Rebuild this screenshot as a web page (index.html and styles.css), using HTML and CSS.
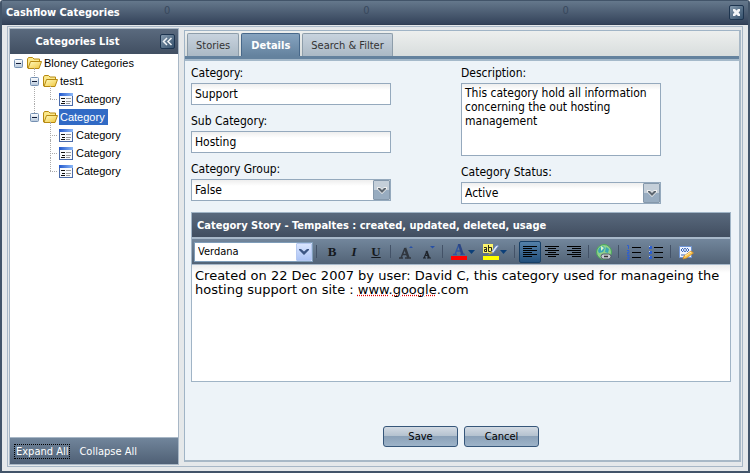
FILE: index.html
```html
<!DOCTYPE html>
<html lang="en">
<head>
<meta charset="utf-8">
<title>Cashflow Categories</title>
<link rel="stylesheet" href="styles.css">
</head>
<body>
<svg class="defs" aria-hidden="true">
  <defs>
    <linearGradient id="gold" x1="0" y1="0" x2="1" y2="1"><stop offset="0" stop-color="#fffbc0"/><stop offset="1" stop-color="#f0c63c"/></linearGradient>
    <linearGradient id="box" x1="0" y1="0" x2="0" y2="1"><stop offset="0" stop-color="#fff"/><stop offset="1" stop-color="#b4c6da"/></linearGradient>
    <linearGradient id="bar" x1="0" y1="0" x2="1" y2="0"><stop offset="0" stop-color="#2258cc"/><stop offset="1" stop-color="#8cb8f8"/></linearGradient>
    <symbol id="folder" viewBox="0 0 16 14">
      <path d="M1.500 12V3l1-1.500h4l1.500 1.500h5.500v3" fill="#fbe88a" stroke="#b78a12"/>
      <path d="M2 12.500 4.500 5.500h11L13 12.500z" fill="url(#gold)" stroke="#b78a12"/>
    </symbol>
    <symbol id="minus" viewBox="0 0 9 9">
      <rect x=".5" y=".5" width="8" height="8" rx="1" fill="url(#box)" stroke="#7590b2"/>
      <path d="M2 4.500h5" stroke="#101c38"/>
    </symbol>
    <symbol id="form" viewBox="0 0 14 13">
      <rect x=".5" y=".5" width="13" height="12" fill="#f8fafd" stroke="#4a6aa8"/>
      <rect width="14" height="3" fill="url(#bar)"/>
      <path d="M2 5.500h4M3 8.500h3M2 10.500h4" stroke="#111"/>
      <path d="M7 5.500h5M7 8.500h5M7 10.500h4" stroke="#999"/>
    </symbol>
    <symbol id="chevron" viewBox="0 0 10 7"><path d="M0 0h3l2 2 2-2h3v2L5 7 0 2z" fill="#eee"/><path d="M1 1h2l2 2 2-2h2v1L5 6 1 2z" fill="#5c6670"/></symbol>
    <symbol id="drop" viewBox="0 0 7 4"><path d="M0 0h7L3.500 4z" fill="#0c3f78"/></symbol>
  </defs>
</svg>
<div class="window">
  <header class="titlebar">
    <h1>Cashflow Categories</h1>
    <button class="square-btn" aria-label="Close"><svg viewBox="0 0 13 13"><path d="M3 3h2l1.500 1.500L8 3h2v2L8.500 6.500 10 8v2H8L6.500 8.500 5 10H3V8l1.500-1.500L3 5z" fill="#f1f4f7"/></svg></button>
  </header>
  <div class="body">
    <aside class="sidebar">
      <div class="side-head">
        <h2>Categories List</h2>
        <button class="square-btn" aria-label="Collapse list"><svg viewBox="0 0 13 13"><path d="M6 3 2.500 6.500 6 10M10.500 3 7 6.500l3.500 3.500" fill="none" stroke="#f1f4f7" stroke-width="1.500"/></svg></button>
      </div>
      <ul class="tree">
        <li>
          <div class="node"><button class="toggle" aria-label="Toggle Bloney Categories"><svg><use href="#minus"/></svg></button><svg class="folder"><use href="#folder"/></svg><span>Bloney Categories</span></div>
          <ul>
            <li>
              <div class="node"><button class="toggle" aria-label="Toggle test1"><svg><use href="#minus"/></svg></button><svg class="folder"><use href="#folder"/></svg><span>test1</span></div>
              <ul>
                <li><div class="node leaf"><svg class="form"><use href="#form"/></svg><span>Category</span></div></li>
              </ul>
            </li>
            <li>
              <div class="node"><button class="toggle" aria-label="Toggle Category"><svg><use href="#minus"/></svg></button><svg class="folder"><use href="#folder"/></svg><span class="selected">Category</span></div>
              <ul>
                <li><div class="node leaf"><svg class="form"><use href="#form"/></svg><span>Category</span></div></li>
                <li><div class="node leaf"><svg class="form"><use href="#form"/></svg><span>Category</span></div></li>
                <li><div class="node leaf"><svg class="form"><use href="#form"/></svg><span>Category</span></div></li>
              </ul>
            </li>
          </ul>
        </li>
      </ul>
      <div class="side-foot">
        <a href="#expand" class="focused">Expand All</a>
        <a href="#collapse">Collapse All</a>
      </div>
    </aside>
    <main class="panel">
      <nav class="tabs">
        <button>Stories</button>
        <button class="active">Details</button>
        <button>Search &amp; Filter</button>
      </nav>
      <form class="content">
        <div class="fields">
          <div class="column">
            <div class="field"><label for="category">Category:</label><input id="category" type="text" value="Support"></div>
            <div class="field"><label for="sub">Sub Category:</label><input id="sub" type="text" value="Hosting"></div>
            <div class="field"><label for="group">Category Group:</label>
              <div class="combo"><select id="group"><option>False</option><option>True</option></select><span class="arrow"><svg><use href="#chevron"/></svg></span></div></div>
          </div>
          <div class="column">
            <div class="field"><label for="description">Description:</label><textarea id="description">This category hold all information concerning the out hosting management</textarea></div>
            <div class="field"><label for="status">Category Status:</label>
              <div class="combo"><select id="status"><option>Active</option><option>Inactive</option></select><span class="arrow"><svg><use href="#chevron"/></svg></span></div></div>
          </div>
        </div>
        <section class="story">
          <h3>Category Story - Tempaltes : created, updated, deleted, usage</h3>
          <div class="toolbar">
            <div class="combo font"><select aria-label="Font"><option>Verdana</option></select><span class="arrow"><svg viewBox="0 0 10 7"><path d="M0 1h2l3 2.500L8 1h2v1L5 7 0 2z" fill="#3c5684"/></svg></span></div>
            <i class="sep"></i>
            <button type="button" class="tool glyph" aria-label="Bold"><b>B</b></button>
            <button type="button" class="tool glyph italic" aria-label="Italic">I</button>
            <button type="button" class="tool glyph under" aria-label="Underline">U</button>
            <i class="sep"></i>
            <button type="button" class="tool" aria-label="Grow font"><svg viewBox="0 0 16 16"><path d="M1 14h4M7 14h6M3 14 7 4M4.500 10.500h5" fill="none" stroke="#30363e" stroke-width="1.500"/><path d="M7 4 10.500 14" stroke="#30363e" stroke-width="2.500"/><path d="M11 4h4l-2-2z" fill="#2851a5"/></svg></button>
            <button type="button" class="tool" aria-label="Shrink font"><svg viewBox="0 0 16 16"><path d="M3 14h3M7 14h4M4 14 7 7M5 11.500h3" fill="none" stroke="#1f242b" stroke-width="1.200"/><path d="M6.500 7 9 14" stroke="#1f242b" stroke-width="2"/><path d="M10 2h5l-2.500 2.500z" fill="#2851a5"/></svg></button>
            <i class="sep"></i>
            <button type="button" class="tool wide" aria-label="Text color"><svg viewBox="0 0 16 16"><path d="M2 10.500h4M9 10.500h5M4 10.500 8 0M5.500 7h5" fill="none" stroke="#2f56a2" stroke-width="1.400"/><path d="m8 0 3.500 10.500" stroke="#2c4684" stroke-width="2.500"/><path fill="#f00" d="M0 12h16v4H0z"/></svg><svg class="drop"><use href="#drop"/></svg></button>
            <button type="button" class="tool wide" aria-label="Highlight color"><svg viewBox="0 0 16 16"><path fill="#fcf36c" d="M0 0h10v9H0z"/><path d="M1 3.500h2.500V8M4 5.500H1.500v2h2M5.500 1v6.500h3v-4h-3" fill="none" stroke="#2b2b18"/><path d="m7.500 9 5-7 2-1 1 1-5 7z" fill="#dce5f5" stroke="#6884bc"/><path d="m5 11 3-4 2 2z" fill="#c8b52c"/><path fill="#ff0" d="M0 12h16v4H0z"/></svg><svg class="drop"><use href="#drop"/></svg></button>
            <i class="sep"></i>
            <button type="button" class="tool pressed" aria-label="Align left"><svg viewBox="0 0 16 16"><path d="M1 2.500h14M1 4.500h9M1 6.500h14M1 8.500h9M1 10.500h14M1 12.500h9" stroke="#000"/></svg></button>
            <button type="button" class="tool" aria-label="Align center"><svg viewBox="0 0 16 16"><path d="M1 2.500h14M4 4.500h8M1 6.500h14M4 8.500h8M1 10.500h14M4 12.500h8" stroke="#000"/></svg></button>
            <button type="button" class="tool" aria-label="Align right"><svg viewBox="0 0 16 16"><path d="M1 2.500h14M6 4.500h9M1 6.500h14M6 8.500h9M1 10.500h14M6 12.500h9" stroke="#000"/></svg></button>
            <i class="sep"></i>
            <button type="button" class="tool" aria-label="Insert link"><svg viewBox="0 0 16 16"><circle cx="8" cy="8" r="7.500" fill="#8fd08c" stroke="#4ba85a"/><path d="m3 4 4-2 2 2-2 4-4 1-1-2zM10 3l3 2-1 4-3-1z" fill="#3aa6b4"/><path d="m5 2 3 2-3 3z" fill="#d7f5c8"/><rect x="5" y="10" width="10" height="5" rx="2.500" fill="#c7cbd0" stroke="#505a66"/><path d="M8 12.500h4" stroke="#333" stroke-width="1.500"/></svg></button>
            <i class="sep"></i>
            <button type="button" class="tool" aria-label="Numbered list"><svg viewBox="0 0 16 16"><path d="M6 3.500h9M6 8.500h9M6 13.500h9" stroke="#000"/><path d="M1 1.500h1.500V5M1 6.500h2v2H1.500V10h2M1 11.500h2v2h-2 2v2H1" fill="none" stroke="#2c5ed0"/></svg></button>
            <button type="button" class="tool" aria-label="Bulleted list"><svg viewBox="0 0 16 16"><path d="M6 3.500h9M6 8.500h9M6 13.500h9" stroke="#000"/><path d="M1 2h3v3H1zM1 7h3v3H1zM1 12h3v3H1z" fill="#2c5ed0"/><path d="M1 2h1v1H1zM1 7h1v1H1zM1 12h1v1H1z" fill="#b9d0ff"/></svg></button>
            <i class="sep"></i>
            <button type="button" class="tool" aria-label="Edit source"><svg viewBox="0 0 16 16"><path d="M1.500 2.500h12v11h-12z" fill="#eff5ff" stroke="#6f94d4"/><path d="M5 4 3 6l2 2M9 4l2 2-2 2M3 11h4" fill="none" stroke="#3d67b4"/><circle cx="7" cy="6" r="1.500" fill="none" stroke="#3d67b4"/><path d="m5 15 1-3 7-5 2.500 2-7 5z" fill="#fbc64e" stroke="#d08a28" stroke-width=".8"/><path d="m7 12 6-4" stroke="#fff0b0"/></svg></button>
          </div>
          <div class="editor" contenteditable="true" spellcheck="false" role="textbox" aria-label="Category story">Created on 22 Dec 2007 by user: David C, this category used for manageing the hosting support on site : <span class="typo">www</span>.<span class="typo">google</span>.com</div>
        </section>
        <div class="actions">
          <button type="button">Save</button>
          <button type="button">Cancel</button>
        </div>
      </form>
    </main>
  </div>
  <div class="ghosts" aria-hidden="true"><span>0</span><span>0</span><span>0</span></div>
</div>
</body>
</html>
```
FILE: styles.css
```css
* { box-sizing: border-box; }

body {
  margin: 0;
  background: #f4f6f8;
  color: #000;
  font-family: "DejaVu Sans Condensed", "DejaVu Sans", sans-serif;
  font-size: 12px;
}

button, input, select, textarea { font: inherit; color: inherit; margin: 0; }
h1, h2, h3, ul { margin: 0; padding: 0; }
ul { list-style: none; }
svg { display: block; flex: none; }
.defs { position: absolute; width: 0; height: 0; }

.window {
  position: relative;
  display: flex;
  flex-direction: column;
  height: 100vh;
  min-height: 460px;
  border: 2px solid #425469;
  border-width: 1px 2px 2px;
  border-radius: 3px 3px 0 0;
  background: #e5e8ea;
}

.titlebar {
  display: flex;
  align-items: center;
  justify-content: space-between;
  height: 24px;
  padding: 0 4px;
  background: linear-gradient(#65788c, #34435a);
  border-bottom: 1px solid #2f3e54;
}

.ghosts {
  position: absolute;
  left: 162px;
  top: 3px;
  display: flex;
  gap: 193px;
  color: #38485d;
  font-size: 11px;
  line-height: 14px;
  pointer-events: none;
}

h1, h2, h3 {
  color: #fff;
  font-size: 11px;
  line-height: 16px;
  font-weight: bold;
}

.square-btn {
  width: 15px;
  height: 15px;
  padding: 0;
  border: 1px solid #1d344f;
  border-radius: 2px;
  background: linear-gradient(135deg, #8499ad, #34506c);
}
.square-btn svg { width: 13px; height: 13px; }

.body {
  display: flex;
  flex: 1;
  min-height: 0;
  margin: 1px 5px 4px;
  padding: 1px;
  border: 1px solid #a8b7c6;
}

.sidebar {
  display: flex;
  flex-direction: column;
  flex: none;
  width: 170px;
  border: 1px solid #a8b7c6;
  background: #fff;
}

.side-head {
  display: flex;
  align-items: center;
  height: 25px;
  padding: 0 3px;
  background: linear-gradient(#5a6a7e, #414f62);
}
.side-head h2 { flex: 1; text-align: center; padding-right: 18px; }

.tree { flex: 1; padding: 0 0 0 2px; font-family: "Liberation Sans", sans-serif; font-size: 11px; }
.tree ul { padding-left: 16px; }
.tree li { position: relative; }
.tree ul > li::before {
  content: "";
  position: absolute;
  left: 6px;
  top: -4px;
  bottom: 4px;
  border-left: 1px dotted #aaa;
}
.tree ul > li:last-child::before { bottom: auto; height: 13px; }

.node {
  position: relative;
  display: flex;
  align-items: center;
  height: 18px;
  line-height: 16px;
}
.node > span { padding: 0 3px 0 1px; white-space: nowrap; }
.node .selected { background: #316ac5; color: #fff; }
.toggle { width: 13px; height: 13px; padding: 2px; border: 0; background: none; }
.toggle svg { width: 9px; height: 9px; }
.folder { width: 16px; height: 14px; margin: 0 1px; }
.form { width: 14px; height: 13px; margin: 0 2px 0 15px; }
.leaf::before {
  content: "";
  position: absolute;
  left: 6px;
  top: 9px;
  width: 7px;
  border-top: 1px dotted #aaa;
}

.side-foot {
  display: flex;
  align-items: center;
  gap: 7px;
  height: 27px;
  padding: 0 4px;
  border-top: 1px solid #a8b7c6;
  background: linear-gradient(#71859b, #4f6075);
  font-size: 11px;
}
.side-foot a { padding: 0 1px; border: 1px solid transparent; color: #fff; line-height: 13px; text-decoration: none; white-space: nowrap; }
.side-foot .focused { border: 1px dotted #000; }

.panel {
  display: flex;
  flex-direction: column;
  flex: 1;
  min-width: 0;
  margin: 2px 0 3px 5px;
  border: 1px solid #a0b4c6;
  border-right: 2px solid #a8b8c6;
  border-bottom: 2px solid #a8b8c6;
  background: #edf3f8;
}

.tabs {
  display: flex;
  gap: 2px;
  height: 28px;
  padding: 2px 2px 0;
  background: linear-gradient(#edefee, #d8dddd);
  border-bottom: 3px solid #64829e;
  box-shadow: 0 2px #a5b9ca;
  font-size: 11px;
}
.tabs button {
  padding: 0 8px;
  border: 1px solid #8d9daa;
  border-bottom: 0;
  border-radius: 2px 2px 0 0;
  background: linear-gradient(#c8d3de, #abb9c5);
  color: #333;
}
.tabs .active { padding: 0 9px; border-color: #47688a; background: linear-gradient(#86a3bf, #64829e); color: #fff; font-weight: bold; }

.content {
  display: flex;
  flex-direction: column;
  flex: 1;
  min-height: 0;
  padding: 4px 8px 13px 6px;
}

.fields { display: grid; grid-template-columns: 1fr 1fr; }
.column { display: flex; flex-direction: column; gap: 6px; }
.field label { display: block; line-height: 20px; }

input, textarea, select {
  display: block;
  width: 200px;
  height: 22px;
  padding: 0 3px;
  border: 1px solid #95a9bd;
  border-radius: 0;
  background: linear-gradient(#eee, #fff 6px);
  outline: 0;
}
textarea { height: 73px; padding: 2px 3px; line-height: 14px; resize: none; overflow: hidden; }
select { appearance: none; width: 100%; }

.combo { position: relative; width: 200px; }
.arrow {
  position: absolute;
  top: 1px;
  right: 1px;
  bottom: 1px;
  display: grid;
  place-items: center;
  width: 17px;
  border: 1px solid #8598ab;
  border-radius: 1px;
  background: linear-gradient(#c5cfd9 50%, #98acc0 50%);
  pointer-events: none;
}
.arrow svg { width: 10px; height: 7px; }

.story {
  display: flex;
  flex-direction: column;
  flex: 1;
  min-height: 0;
  margin-top: 8px;
  border: 1px solid #a0b4c6;
}
.story h3 {
  padding: 5px 5px 3px;
  border-bottom: 1px solid #a8b9ca;
  background: linear-gradient(#59697d, #414e60);
}

.toolbar {
  display: flex;
  align-items: center;
  height: 27px;
  padding: 0 2px;
  border: 1px solid #a8b9ca;
  border-width: 1px 0;
  background: linear-gradient(#72869c, #526376);
}
.font { width: 119px; }
.font select { height: 20px; border: 1px solid #7f9db9; background: #fff; font-size: 11px; }
.font .arrow { width: 16px; border-color: #b5c8f0; background: linear-gradient(#dae6ff, #abc3f5); }

.sep { flex: none; width: 1px; height: 13px; margin: 0 4px 0 3px; background: #435267; }
.tool {
  display: flex;
  align-items: center;
  justify-content: center;
  flex: none;
  width: 22px;
  height: 22px;
  padding: 0;
  border: 1px solid transparent;
  border-radius: 2px;
  background: none;
}
.tool svg { width: 16px; height: 16px; }
.tool .drop { width: 7px; height: 4px; margin-left: 1px; }
.wide { width: 32px; }
.pressed { border-color: #173f66; background: linear-gradient(#5480a8, #23507c); }
.glyph { color: #15191e; font-family: "Liberation Serif", serif; font-size: 13px; font-weight: bold; }
.italic { font-style: italic; }
.under { text-decoration: underline; }

.editor {
  flex: 1;
  padding: 4px 3px;
  background: linear-gradient(#eee, #fff 8px);
  font-family: "DejaVu Sans", sans-serif;
  font-size: 13px;
  line-height: 14px;
  outline: 0;
}
.typo { text-decoration: underline dotted #d00; }

.actions { display: flex; justify-content: center; gap: 6px; margin-top: 44px; }
.actions button {
  width: 75px;
  height: 21px;
  padding: 0;
  border: 1px solid #36567a;
  border-radius: 3px;
  background: linear-gradient(#d3dae3, #b2c0ce 50%, #8ba1b8 50%, #9db3c9);
  font-size: 11px;
}
```
